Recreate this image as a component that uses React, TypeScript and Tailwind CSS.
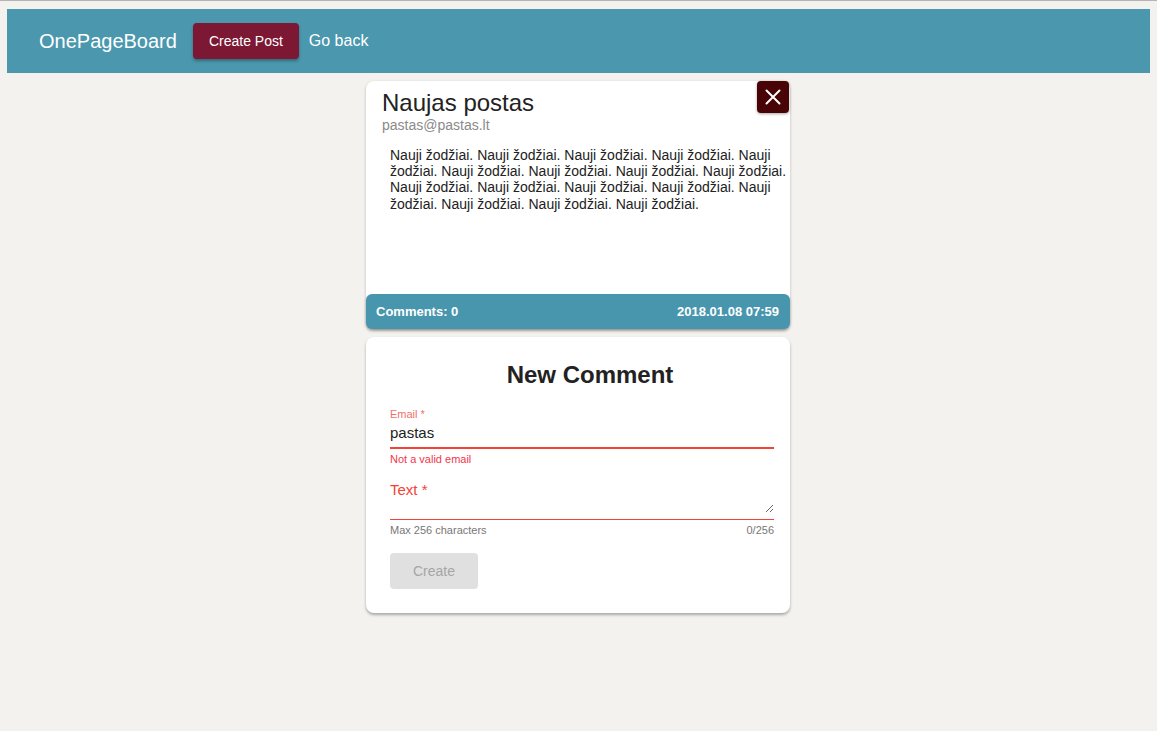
const body =
  "Nauji žodžiai. Nauji žodžiai. Nauji žodžiai. Nauji žodžiai. Nauji žodžiai. Nauji žodžiai. Nauji žodžiai. Nauji žodžiai. Nauji žodžiai. Nauji žodžiai. Nauji žodžiai. Nauji žodžiai. Nauji žodžiai. Nauji žodžiai. Nauji žodžiai. Nauji žodžiai. Nauji žodžiai.";

function Header() {
  return (
    <header className="mx-[7px] h-16 bg-[#4a97ae] flex items-center pl-8">
      <span className="text-[20px] text-white">OnePageBoard</span>
      <button className="ml-4 h-9 px-4 rounded-sm bg-[#7c1834] text-white text-[14px] shadow-[0_2px_3px_rgba(0,0,0,0.3)]">
        Create Post
      </button>
      <a className="ml-[10px] text-[16px] text-white">Go back</a>
    </header>
  );
}

function CloseIcon() {
  return (
    <svg width="32" height="32" viewBox="0 0 32 32" fill="none" stroke="currentColor" strokeWidth="2" strokeLinecap="round">
      <path d="M9.5 9.5 22.5 22.5M22.5 9.5 9.5 22.5" />
    </svg>
  );
}

function PostCard() {
  return (
    <div className="relative bg-white rounded-lg shadow-[0_1px_3px_rgba(0,0,0,0.25)]">
      <button className="absolute right-[1px] top-0 w-8 h-8 rounded-[4px] bg-[#480306] flex items-center justify-center text-white shadow-[0_1px_3px_rgba(0,0,0,0.35)]">
        <CloseIcon />
      </button>
      <div className="pt-2 pl-4">
        <h1 className="text-[24px] leading-[28px] text-[#222]">Naujas postas</h1>
        <p className="text-[14px] leading-4 text-[#8a8a8a]">pastas@pastas.lt</p>
      </div>
      <p className="mt-[14px] h-[147px] pl-6 text-[14px] leading-[16.2px] text-[#222]">
        {body}
      </p>
      <div className="h-[35px] rounded-md bg-[#4896ae] flex items-center justify-between pl-[10px] pr-[11px] text-white text-[13px] font-bold shadow-[0_2px_3px_rgba(0,0,0,0.25)]">
        <span>Comments: 0</span>
        <span>2018.01.08 07:59</span>
      </div>
    </div>
  );
}

function CommentCard() {
  return (
    <div className="mt-2 bg-white rounded-lg pl-6 pr-4 pt-6 pb-6 shadow-[0_2px_3px_rgba(0,0,0,0.3)]">
      <h2 className="-mr-4 text-[24px] leading-[28px] font-bold text-center text-[#222]">
        New Comment
      </h2>

      <div className="mt-[18px]">
        <label className="block text-[11px] leading-[14px] text-[#f0716b]">Email *</label>
        <div className="mt-[2px] pb-1 border-b-2 border-[#f44336] text-[15px] leading-5 text-[#222]">
          pastas
        </div>
        <p className="mt-[3px] text-[11px] leading-[14px] text-[#f4364c]">Not a valid email</p>
      </div>

      <div className="mt-[14px]">
        <div className="pb-[6px] border-b border-[#f44336]">
          <textarea
            placeholder="Text *"
            className="block w-full h-[33px] p-0 text-[15px] leading-5 outline-none placeholder:text-[#f44336]"
          />
        </div>
        <div className="mt-[3px] flex justify-between text-[11px] leading-[14px] text-[#777]">
          <span>Max 256 characters</span>
          <span>0/256</span>
        </div>
      </div>

      <button className="mt-4 w-[88px] h-9 rounded-sm bg-[#e0e0e0] text-[14px] text-[#a6a6a6]">
        Create
      </button>
    </div>
  );
}

export default function App() {
  return (
    <div
      className="min-h-screen bg-[#f3f2ee] border-t border-[#b4b4b4] pt-2"
      style={{ fontFamily: '"Liberation Sans", Arial, sans-serif' }}
    >
      <Header />
      <main className="mx-auto mt-2 w-[425px] pr-px">
        <PostCard />
        <CommentCard />
      </main>
    </div>
  );
}
